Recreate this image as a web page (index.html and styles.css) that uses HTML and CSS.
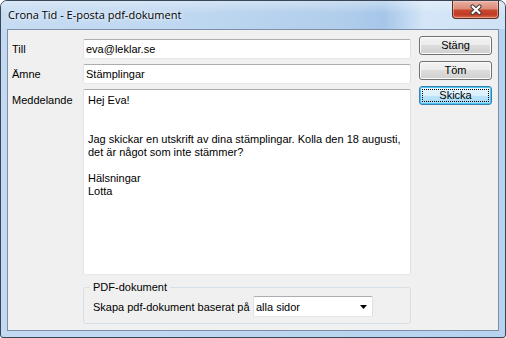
FILE: index.html
```html
<!DOCTYPE html>
<html lang="sv">
<head>
<meta charset="utf-8">
<title>Crona Tid - E-posta pdf-dokument</title>
<link rel="stylesheet" href="styles.css">
</head>
<body>
<div class="window">
  <div class="titlebar">
    <span class="title">Crona Tid - E-posta pdf-dokument</span>
    <button class="close" aria-label="Stäng fönster">
      <svg width="14" height="12" viewBox="0 0 14 12">
        <path d="M3.5 2.5l7 6.5m0-6.5l-7 6.5" stroke="#3c3c3c" stroke-width="4.2" stroke-linecap="round" fill="none"/>
        <path d="M3.5 2.5l7 6.5m0-6.5l-7 6.5" stroke="#ffffff" stroke-width="2.2" stroke-linecap="round" fill="none"/>
      </svg>
    </button>
  </div>
  <div class="client">
    <div class="form">
      <label class="lbl" for="till">Till</label>
      <input class="field" id="till" value="eva@leklar.se">
      <label class="lbl" for="amne">Ämne</label>
      <input class="field" id="amne" value="Stämplingar">
      <label class="lbl lbl-top" for="msg">Meddelande</label>
      <textarea class="field message" id="msg">Hej Eva!


Jag skickar en utskrift av dina stämplingar. Kolla den 18 augusti,
det är något som inte stämmer?

Hälsningar
Lotta</textarea>
      <fieldset class="group">
        <legend>PDF-dokument</legend>
        <div class="group-row">
          <span class="group-label">Skapa pdf-dokument baserat på</span>
          <div class="combo">
            <span>alla sidor</span>
            <svg width="7" height="4" viewBox="0 0 7 4"><path d="M0 0h7L3.5 4z" fill="#000"/></svg>
          </div>
        </div>
      </fieldset>
    </div>
    <div class="buttons">
      <button class="btn">Stäng</button>
      <button class="btn">Töm</button>
      <button class="btn btn-default">Skicka</button>
    </div>
  </div>
</div>
</body>
</html>
```

FILE: styles.css
```css
* { box-sizing: border-box; }
html, body { margin: 0; padding: 0; }
body {
  width: 506px;
  height: 338px;
  overflow: hidden;
  background: #ffffff;
  font-family: "Liberation Sans", Arial, sans-serif;
  font-size: 11px;
  color: #000;
}
.window {
  width: 506px;
  height: 338px;
  border: 1px solid #3a4656;
  border-radius: 7px 7px 3px 3px;
  background: linear-gradient(to right, #c4daf2 0%, #bcd5ef 60%, #b7d3f0 100%);
  display: flex;
  flex-direction: column;
  overflow: hidden;
}
.titlebar {
  height: 28px;
  flex: none;
  display: flex;
  justify-content: space-between;
  align-items: flex-start;
  padding: 0 6px 0 7px;
  background:
    linear-gradient(to bottom, rgba(255,255,255,0.35), rgba(255,255,255,0) 45%),
    linear-gradient(to right, #c6dcf3 0%, #bed7f0 40%, #b0cdeb 68%, #a6c6e9 76%, #d4e6f7 84%, #cfe2f5 100%);
}
.title {
  font-family: "Open Sans", "Noto Sans", sans-serif;
  font-size: 11px;
  line-height: 15px;
  padding-top: 6px;
  color: #000;
  text-shadow: 0 0 6px rgba(255,255,255,0.9), 0 0 3px rgba(255,255,255,0.7);
}
.close {
  width: 47px;
  height: 18px;
  margin: 0;
  padding: 0;
  border: 1px solid #5a2c24;
  border-top: none;
  border-radius: 0 0 4px 4px;
  background: linear-gradient(to bottom, #e9b0a2 0%, #dc8c79 45%, #c9472f 55%, #c13a23 80%, #d6704f 100%);
  box-shadow: inset 0 0 0 1px rgba(255,220,210,0.45);
  display: flex;
  align-items: center;
  justify-content: center;
}
.client {
  flex: 1;
  margin: 0 6px 6px 6px;
  border: 1px solid #7d8fa6;
  background: #f0f0f0;
  display: flex;
  align-items: flex-start;
  padding: 0 6px 0 4px;
}
.form {
  display: grid;
  grid-template-columns: 71px 328px;
  grid-template-rows: 20px 20px 186px auto;
  row-gap: 5px;
  padding-top: 9px;
}
.lbl {
  line-height: 20px;
}
.lbl-top {
  line-height: 13px;
  padding-top: 5px;
}
.field {
  width: 100%;
  height: 20px;
  margin: 0;
  padding: 0 2px;
  border: 1px solid;
  border-color: #abadb3 #dbdfe6 #e3e9ef #e2e3ea;
  border-radius: 2px;
  background: #fff;
  font-family: "Liberation Sans", Arial, sans-serif;
  font-size: 11px;
  color: #000;
  outline: none;
}
.message {
  height: 186px;
  padding: 4px 4px;
  line-height: 13px;
  resize: none;
  overflow: hidden;
  white-space: pre-wrap;
}
.group {
  grid-column: 2;
  margin: 1px 0 0 0;
  padding: 2px 6px 6px 6px;
  border: 1px solid #d5dfe5;
  border-radius: 3px;
  min-width: 0;
}
.group legend {
  padding: 0 3px;
  line-height: 13px;
  font-size: 11px;
}
.group-row {
  display: flex;
  align-items: center;
  margin-left: 3px;
}
.group-label {
  width: 160px;
  flex: none;
}
.combo {
  width: 120px;
  height: 21px;
  border: 1px solid;
  border-color: #abadb3 #dbdfe6 #e3e9ef #e2e3ea;
  border-radius: 2px;
  background: #fff;
  display: flex;
  align-items: center;
  justify-content: space-between;
  padding: 0 5px 0 2px;
}
.buttons {
  margin-left: 8px;
  padding-top: 6px;
  display: flex;
  flex-direction: column;
  gap: 6px;
}
.btn {
  width: 73px;
  height: 19px;
  margin: 0;
  padding: 0;
  font-family: "Liberation Sans", Arial, sans-serif;
  font-size: 11px;
  line-height: 17px;
  color: #000;
  border: 1px solid #707070;
  border-radius: 3px;
  background: linear-gradient(to bottom, #f2f2f2 0%, #ebebeb 50%, #dddddd 50%, #cfcfcf 100%);
  box-shadow: inset 0 0 0 1px #fcfcfc;
}
.btn-default {
  position: relative;
  border-color: #3c7fb1;
  background: linear-gradient(to bottom, #eaf6fd 0%, #d9f0fc 50%, #bee6fd 50%, #a7d9f5 100%);
  box-shadow: inset 0 0 0 1px #48c8f0;
}
.btn-default::after {
  content: "";
  position: absolute;
  inset: 2px;
  border: 1px dotted #000;
}
```
